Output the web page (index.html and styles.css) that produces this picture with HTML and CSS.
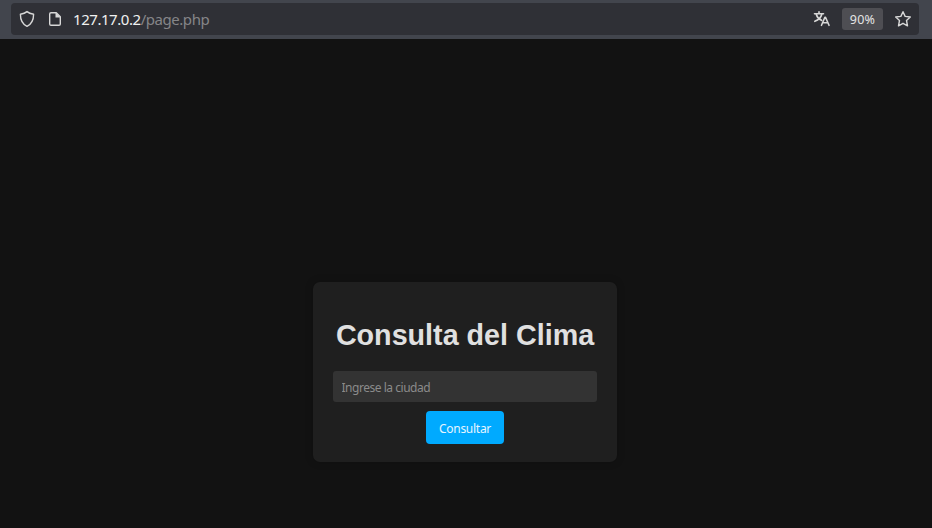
FILE: index.html
```html
<!DOCTYPE html>
<html lang="es">
<head>
<meta charset="utf-8">
<title>Consulta del Clima</title>
<link rel="stylesheet" href="styles.css">
</head>
<body>
<header class="toolbar">
  <div class="urlbar">
    <svg class="icon shield" width="16" height="18" viewBox="0 0 16 18"><path d="M8 1.6C6.4 3 4 3.9 1.4 4.3c0 5.5 1.8 9.8 6.6 12.1 4.8-2.3 6.6-6.6 6.6-12.1C12 3.9 9.600 3 8 1.600Z"/></svg>
    <svg class="icon doc" width="14" height="16" viewBox="0 0 14 16"><path d="M8.300 1.700H3Q1.700 1.700 1.700 3v10Q1.700 14.300 3 14.300h8Q12.300 14.300 12.300 13V5.700Z"/><path class="solid" d="M7.500 1.200v5.300h5.200Z"/></svg>
    <div class="address"><span class="host">127.17.0.2</span><span class="path">/page.php</span></div>
    <svg class="icon translate" width="18" height="18" viewBox="0 0 18 18"><path d="M1.500 3.700h9M6 1.700v2M3.200 4.200C4 7 6.300 9.300 8.500 10.300M8.800 4.200C8 7.500 5 10 1.800 11.300M8.500 15.300l3.400-8h.6L16 15.300M9.900 12.700h4.700"/></svg>
    <span class="zoom">90%</span>
    <svg class="icon star" width="18" height="18" viewBox="0 0 18 18"><path d="M9 1.700l2.150 4.700 5.150.6-3.800 3.500 1 5.300L9 13.300l-4.500 2.500 1-5.300L1.700 7l5.150-.6Z"/></svg>
  </div>
</header>
<main class="page">
  <form class="card">
    <h1 class="title">Consulta del Clima</h1>
    <input class="city" type="text" placeholder="Ingrese la ciudad">
    <button class="submit" type="button">Consultar</button>
  </form>
</main>
</body>
</html>
```
FILE: styles.css
```css
* {
  box-sizing: border-box;
}

body {
  margin: 0;
  height: 528px;
  overflow: hidden;
  display: flex;
  flex-direction: column;
  background: #121212;
  font-family: "Noto Sans", sans-serif;
}

.toolbar {
  flex: none;
  height: 39px;
  padding: 3px 13px 4px 11px;
  background: #42454d;
}

.urlbar {
  display: flex;
  align-items: center;
  height: 32px;
  padding: 0 7px 0 8px;
  border-radius: 4px;
  background: #2f3036;
}

.icon {
  flex: none;
  fill: none;
  stroke: #d8d8d8;
  stroke-width: 1.4;
  stroke-linejoin: round;
  stroke-linecap: round;
}

.solid {
  fill: #d8d8d8;
  stroke: none;
}

.doc {
  margin-left: 13px;
}

.translate {
  stroke-width: 1.6;
}

.address {
  flex: 1;
  margin-left: 11px;
  font-size: 15px;
  line-height: 20px;
  letter-spacing: -0.45px;
  white-space: nowrap;
}

.host {
  color: #f0f0f0;
}

.path {
  color: #858588;
}

.zoom {
  width: 41px;
  height: 22px;
  margin: 0 11px;
  border-radius: 3px;
  background: #4e4e53;
  color: #e4e4e4;
  font-size: 12.5px;
  line-height: 23px;
  letter-spacing: 0.3px;
  text-align: center;
}

.page {
  flex: 1;
  padding-top: 243px;
}

.card {
  display: flex;
  flex-direction: column;
  align-items: center;
  width: 304px;
  height: 180px;
  margin-left: 313px;
  padding: 36px 20px 18px;
  border-radius: 7px;
  background: #1f1f1f;
  box-shadow: 0 0 9px rgba(0, 0, 0, 0.2);
}

.title {
  margin: 0 0 19px;
  color: #e0e0e0;
  font: bold 28.7px/34px "Liberation Sans", sans-serif;
  white-space: nowrap;
}

.city {
  width: 264px;
  height: 31px;
  margin: 0 0 9px;
  padding: 1px 8.5px 0;
  border: 0;
  border-radius: 3px;
  background: #333;
  font: 12px "Noto Sans", sans-serif;
  letter-spacing: -0.47px;
}

.city::placeholder {
  color: #8b8b8b;
}

.submit {
  width: 78px;
  height: 33px;
  padding: 1px 0 0;
  border: 0;
  border-radius: 4px;
  background: #0af;
  color: #e6f5ff;
  font: 12px "Noto Sans", sans-serif;
  letter-spacing: -0.27px;
}
```
